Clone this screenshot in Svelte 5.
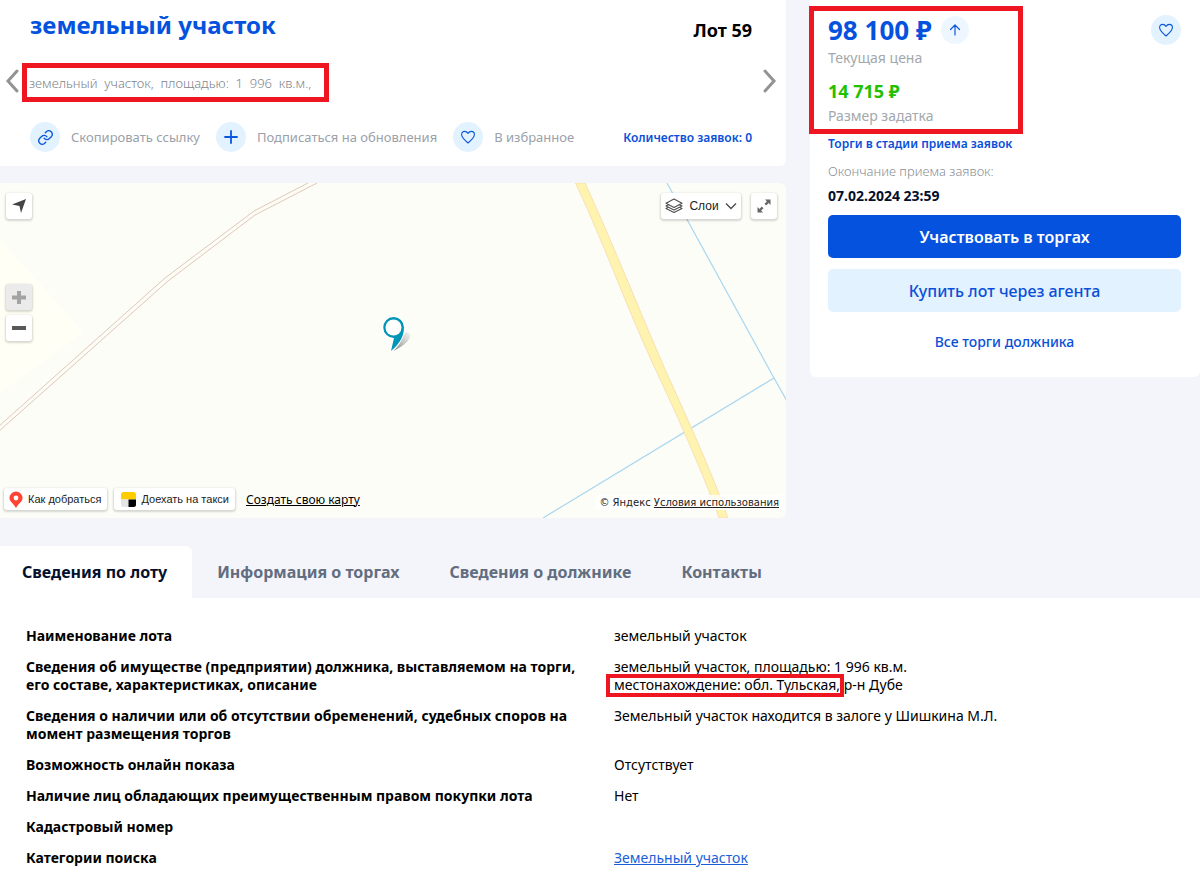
<script>
  const tabs = ['Сведения по лоту', 'Информация о торгах', 'Сведения о должнике', 'Контакты'];
  let active = $state(0);
</script>

{#snippet heart()}
  <svg viewBox="0 0 16 16" width="16" height="16" fill="none" stroke="#0a56dd" stroke-width="1.1" stroke-linejoin="round" aria-hidden="true">
    <path d="M8 14C5.6 12 1.6 9 1.6 5.6 1.6 3.6 3 2.4 4.7 2.4 6.2 2.4 7.2 3.2 8 4.4 8.8 3.2 9.8 2.4 11.3 2.4 13 2.4 14.4 3.6 14.4 5.6 14.4 9 10.4 12 8 14Z" />
  </svg>
{/snippet}

<main class="page">
  <div class="top">
    <div class="left">
      <section class="card lot">
        <header class="lot-head">
          <h1>земельный участок</h1>
          <strong class="lot-number">Лот 59</strong>
        </header>
        <div class="carousel">
          <button class="arrow" aria-label="Предыдущий лот">
            <svg viewBox="0 0 14 24" width="14" height="24" fill="none" stroke="#939393" stroke-width="3" stroke-linecap="round"><path d="M12 2 3 12l9 10" /></svg>
          </button>
          <p class="description marked">{'земельный  участок,  площадью:  1  996  кв.м.,'}</p>
          <button class="arrow next" aria-label="Следующий лот">
            <svg viewBox="0 0 14 24" width="14" height="24" fill="none" stroke="#939393" stroke-width="3" stroke-linecap="round"><path d="M2 2l9 10-9 10" /></svg>
          </button>
        </div>
        <div class="actions">
          <button class="action">
            <span class="circle">
              <svg viewBox="0 0 24 24" width="17" height="17" fill="none" stroke="#0a56dd" stroke-width="1.9" stroke-linecap="round" stroke-linejoin="round"><path d="M10 13a5 5 0 0 0 7.5.5l3-3a5 5 0 0 0-7-7l-1.8 1.7" /><path d="M14 11a5 5 0 0 0-7.500-.5l-3 3a5 5 0 0 0 7 7l1.700-1.700" /></svg>
            </span>
            Скопировать ссылку
          </button>
          <button class="action">
            <span class="circle">
              <svg viewBox="0 0 16 16" width="16" height="16" fill="none" stroke="#0a56dd" stroke-width="1.8" stroke-linecap="round"><path d="M8 2v12M2 8h12" /></svg>
            </span>
            Подписаться на обновления
          </button>
          <button class="action">
            <span class="circle">{@render heart()}</span>
            В избранное
          </button>
          <span class="bids">Количество заявок: 0</span>
        </div>
      </section>

      <section class="map" aria-label="Карта">
        <svg class="tiles" viewBox="0 0 786 335" preserveAspectRatio="xMidYMid slice" aria-hidden="true">
          <rect width="786" height="335" fill="#fcfdf7" />
          <path d="M0 57 84 149 0 210Z" fill="#fffff5" />
          <g fill="none" stroke="#e3c6b8" stroke-width="1">
            <path d="M-2 244 72 178 165 95 254 28 308 0" />
            <path d="M-2 249 78 178 168 98 255 32 317 0" />
          </g>
          <g fill="none" stroke="#a9d6f0" stroke-width="1.2">
            <path d="M667 0 774 195 787 218" />
            <path d="M543 335 774 195" />
          </g>
          <path d="M575.500 0C610 74 625 122 660 196 675 228 704 292 719 335H728C710 285 687 235 668 193 640 130 618 72 585 0Z" fill="#fff3b0" stroke="#fadfb0" stroke-width="1" />
        </svg>
        <svg class="pin" viewBox="0 0 30 38" width="30" height="38" aria-hidden="true">
          <defs><linearGradient id="shade" x1="0" y1="1" x2="1" y2="0"><stop offset="0" stop-color="#777" /><stop offset="1" stop-color="#ddd" stop-opacity=".4" /></linearGradient></defs>
          <path d="M11 35 20 22 24 16Q31 18 26 25 20 31 11 35Z" fill="url(#shade)" />
          <path d="M11 0A11.500 11.500 0 0 0 0 12C0 18 4 23 9 23L7 36H10C15 32 22 24 23 12A11.500 11.500 0 0 0 11 0Z" fill="#fff" />
          <path d="M11.500 1A10.500 10.500 0 1 0 12 22L9 35C14 31 22 23 22 11.500A10.500 10.500 0 0 0 11.500 1Z" fill="#0095b6" />
          <circle cx="11.500" cy="11.500" r="8" fill="#fff" />
        </svg>
        <button class="tool square locate" aria-label="Моё местоположение">
          <svg viewBox="0 0 16 16" width="16" height="16"><path d="M1 6.500 15 1 10 15 8.500 8Z" fill="#454545" /></svg>
        </button>
        <div class="zoom">
          <button class="tool square off" aria-label="Приблизить"><svg viewBox="0 0 14 14" width="14" height="14" stroke="#a3a3a3" stroke-width="4"><path d="M7 1v13M0 7.500h14" /></svg></button>
          <button class="tool square" aria-label="Отдалить"><svg viewBox="0 0 14 14" width="14" height="14" stroke="#595959" stroke-width="4"><path d="M0 7h14" /></svg></button>
        </div>
        <div class="corner">
          <button class="tool layers">
            <svg viewBox="0 0 18 16" width="18" height="16" fill="#fff" stroke="#4d4d4d" stroke-width="1.1" stroke-linejoin="round"><path d="M1 10.500 9 6.500l8 4-8 4Z" /><path d="M1 8 9 4l8 4-8 4Z" /><path d="M1 5.200 9 1l8 4.200-8 4.200Z" /></svg>
            Слои
            <svg viewBox="0 0 12 8" width="12" height="8" fill="none" stroke="#4d4d4d" stroke-width="1.400"><path d="m1 1.500 5 5 5-5" /></svg>
          </button>
          <button class="tool square" aria-label="Во весь экран">
            <svg viewBox="0 0 14 14" width="14" height="14" fill="#666"><path d="M8 .5h5.500V6L11.600 4.100 9.200 6.500 7.500 4.800 9.900 2.400ZM6 13.500H.5V8l1.900 1.900L4.800 7.500 6.500 9.200 4.100 11.600Z" /></svg>
          </button>
        </div>
        <div class="links">
          <button class="tool wide">
            <svg viewBox="0 0 14 17" width="14" height="17"><path d="M7 .5A6.500 6.500 0 0 0 .5 7C.5 11 5 12.500 6.500 16.500h1C9 12.500 13.500 11 13.500 7A6.500 6.500 0 0 0 7 .5Z" fill="#ff4433" /><circle cx="7" cy="7" r="2.400" fill="#fff" /></svg>
            Как добраться
          </button>
          <button class="tool wide taxi">
            <svg viewBox="0 0 15 15" width="15" height="15"><path d="M0 7.500V2.500Q0 0 2.500 0h10Q15 0 15 2.500v5Z" fill="#fc0" /><path d="M0 7.500h7.500V15h-5Q0 15 0 12.500Z" fill="#e4e4e4" /><path d="M7.500 7.500H15v5Q15 15 12.500 15h-5Z" fill="#000" /></svg>
            Доехать на такси
          </button>
          <a class="create" href="#map">Создать свою карту</a>
        </div>
        <div class="copyright">© Яндекс <a href="#terms">Условия использования</a></div>
      </section>
    </div>

    <aside class="card offer">
      <div class="price-row">
        <strong class="price">98 100 ₽</strong>
        <span class="circle small">
          <svg viewBox="0 0 14 14" width="14" height="14" fill="none" stroke="#0a56dd" stroke-width="1.2" stroke-linecap="round" stroke-linejoin="round"><path d="M7 12V2M2.500 6.500 7 2l4.500 4.500" /></svg>
        </span>
        <button class="circle favourite" aria-label="В избранное">{@render heart()}</button>
      </div>
      <div class="label">Текущая цена</div>
      <strong class="deposit">14 715 ₽</strong>
      <div class="label">Размер задатка</div>
      <div class="status">Торги в стадии приема заявок</div>
      <div class="until">Окончание приема заявок:</div>
      <time datetime="2024-02-07T23:59">07.02.2024 23:59</time>
      <button class="cta primary">Участвовать в торгах</button>
      <button class="cta">Купить лот через агента</button>
      <a class="all" href="#debtor">Все торги должника</a>
      <div class="frame" aria-hidden="true"></div>
    </aside>
  </div>

  <nav class="tabs">
    {#each tabs as tab, i}
      <button class:active={i === active} onclick={() => (active = i)}>{tab}</button>
    {/each}
  </nav>

  <section class="details">
    <table>
      <tbody>
        <tr><th scope="row">Наименование лота</th><td>земельный участок</td></tr>
        <tr>
          <th scope="row">Сведения об имуществе (предприятии) должника, выставляемом на торги, его составе, характеристиках, описание</th>
          <td>земельный участок, площадью: 1 996 кв.м.<br /><span class="place">местонахождение: обл. Тульская,</span> р-н Дубе</td>
        </tr>
        <tr>
          <th scope="row">Сведения о наличии или об отсутствии обременений, судебных споров на момент размещения торгов</th>
          <td>Земельный участок находится в залоге у Шишкина М.Л.</td>
        </tr>
        <tr><th scope="row">Возможность онлайн показа</th><td>Отсутствует</td></tr>
        <tr><th scope="row">Наличие лиц обладающих преимущественным правом покупки лота</th><td>Нет</td></tr>
        <tr><th scope="row">Кадастровый номер</th><td></td></tr>
        <tr><th scope="row">Категории поиска</th><td><a href="#category">Земельный участок</a></td></tr>
      </tbody>
    </table>
  </section>
</main>

<style>
  :global(body) { margin: 0; background: #f4f5fa; }
  .page { font-family: 'Noto Sans', 'Open Sans', sans-serif; font-size: 14px; color: #000; }
  button { font: inherit; border: 0; padding: 0; margin: 0; background: none; cursor: pointer; color: inherit; }
  svg { display: block; flex: none; }
  .card { background: #fff; }
  .top { display: grid; grid-template-columns: minmax(0, 786fr) minmax(0, 390fr); column-gap: 24px; align-items: start; }

  .lot { border-radius: 0 0 6px 0; padding-bottom: 14px; }
  .lot-head { display: flex; justify-content: space-between; padding: 8px 34px 0 30px; }
  h1 { margin: 0; font-size: 24px; line-height: 34px; font-weight: 700; color: #0452de; }
  .lot-number { font-size: 18px; line-height: 44px; font-weight: 700; }
  .carousel { display: flex; align-items: center; height: 58px; padding: 0 9px 0 5px; }
  .arrow.next { margin-left: auto; }
  .description { position: relative; margin: 4px 0 0 10px; font-size: 13px; line-height: 20px; font-weight: 300; color: #80858c; white-space: pre-wrap; }
  .marked::after { content: ''; position: absolute; inset: -10px -18px -9px -7px; border: 5px solid #ee1620; }
  .actions { display: flex; align-items: center; gap: 16px; padding: 12px 34px 0 30px; }
  .action { display: flex; align-items: center; gap: 11px; font-size: 13px; line-height: 20px; color: #9aa1a9; white-space: nowrap; }
  .circle { display: flex; align-items: center; justify-content: center; flex: none; width: 30px; height: 30px; border-radius: 50%; background: #e2f2ff; }
  .circle.small { width: 28px; height: 28px; background: #eef7ff; }
  .bids { margin-left: auto; font-size: 12px; font-weight: 600; color: #0a4fd8; white-space: nowrap; }

  .map { position: relative; height: 335px; margin-top: 17px; overflow: hidden; border-radius: 0 6px 6px 0; font-family: 'Liberation Sans', Arial, sans-serif; font-size: 11px; color: #222; }
  .tiles { position: absolute; inset: 0; width: 100%; height: 100%; }
  .pin { position: absolute; left: calc(50% - 11px); top: 133px; }
  .tool { display: flex; align-items: center; justify-content: center; background: #fff; border-radius: 3px; box-shadow: 0 1px 2px 1px rgba(0, 0, 0, 0.15); white-space: nowrap; }
  .square { width: 26px; height: 26px; }
  .off { background: #ebebeb; }
  .locate { position: absolute; left: 6px; top: 10px; }
  .zoom { position: absolute; left: 6px; top: 101px; display: flex; flex-direction: column; gap: 5px; }
  .corner { position: absolute; right: 9px; top: 10px; display: flex; gap: 10px; }
  .layers { width: 80px; gap: 6px; font-size: 12px; }
  .links { position: absolute; left: 4px; bottom: 8px; display: flex; align-items: center; gap: 7px; }
  .wide { height: 22px; padding: 0 6px 0 5px; gap: 5px; }
  .taxi { padding-left: 7px; }
  .create { margin-left: 4px; color: #000; font-family: 'Noto Sans', sans-serif; font-size: 12px; }
  .copyright { position: absolute; right: 3px; bottom: 8px; padding: 0 4px; line-height: 15px; font-family: 'DejaVu Sans', Verdana, sans-serif; font-size: 10px; color: #222; background: rgba(255, 255, 255, 0.8); border-radius: 3px; }
  .copyright a { color: inherit; }

  .offer { position: relative; display: flex; flex-direction: column; padding: 14px 19px 23px 18px; border-radius: 0 0 6px 6px; }
  .price-row { display: flex; align-items: center; gap: 10px; height: 32px; }
  .price { font-size: 26px; line-height: 32px; color: #0452de; }
  .favourite { margin-left: auto; }
  .label { font-size: 14px; line-height: 24px; color: #a3a8ae; }
  .deposit { margin-top: 8px; font-size: 18px; line-height: 26px; color: #22c000; }
  .status { font-size: 12px; line-height: 32px; font-weight: 600; color: #0a4fd8; }
  .until { font-size: 13px; line-height: 22px; font-weight: 300; color: #8a8f96; }
  time { font-size: 14px; line-height: 28px; font-weight: 700; color: #04102c; }
  .cta { height: 43px; margin-top: 11px; border-radius: 5px; background: #e2f2ff; color: #0a4fd8; font-size: 16px; font-weight: 500; }
  .primary { margin-top: 5px; background: #0452de; color: #fff; font-weight: 600; }
  .all { margin-top: 18px; align-self: center; line-height: 24px; font-weight: 500; color: #0a4fd8; text-decoration: none; }
  .frame { position: absolute; left: -1px; top: 6px; width: 204px; height: 118px; border: 5px solid #ee1620; }

  .tabs { display: flex; margin-top: 28px; }
  .tabs button { height: 52px; padding: 0 25px; font-size: 16px; font-weight: 700; color: #626d80; }
  .tabs .active { padding-left: 22px; background: #fff; border-radius: 0 6px 0 0; color: #04102c; }

  .details { background: #fff; padding: 23px 21px 7px 26px; }
  table { width: 100%; border-collapse: collapse; table-layout: fixed; font-size: 14px; line-height: 18px; }
  th, td { padding: 6px 0 7px; vertical-align: top; text-align: left; }
  th { width: 51%; padding-right: 20px; box-sizing: border-box; font-weight: 700; }
  td a { color: #1a5fd8; }
  .place { position: relative; }
  .place::after { content: ''; position: absolute; inset: -1px -4px -3px -8px; border: 4px solid #ee1620; }
</style>
